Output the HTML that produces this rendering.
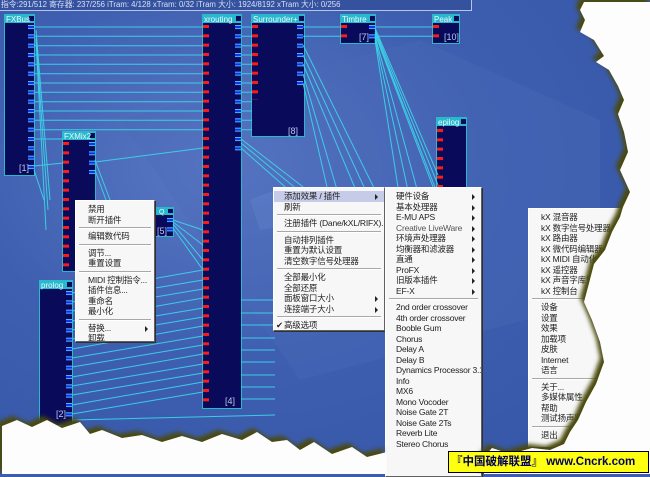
<!DOCTYPE html>
<html><head><meta charset="utf-8">
<style>
*{margin:0;padding:0;box-sizing:border-box}
body{width:650px;height:474px;overflow:hidden;position:relative;background:#3d5cae;font-family:"Liberation Sans","Noto Sans CJK SC",sans-serif}
svg{position:absolute;left:0;top:0}
.menu{position:absolute;background:#f7f7f7;border:1px solid #fff;border-right-color:#606060;border-bottom-color:#606060;box-shadow:1px 1px 0 #303030;padding-top:3px;font-size:8.5px;letter-spacing:-0.2px;color:#222;overflow:hidden}
.it{height:10.5px;line-height:10.5px;position:relative;white-space:nowrap}
.sep{height:6px;position:relative}
.sep:after{content:"";position:absolute;left:3px;right:3px;top:2px;border-top:1px solid #a8a8a8;border-bottom:1px solid #fff}
.ar:after{content:"";position:absolute;right:6px;top:3px;border-left:3px solid #222;border-top:3px solid transparent;border-bottom:3px solid transparent}
.hl{background:#c6cbe8}
.g{color:#555}
#top{position:absolute;left:0;top:0;width:472px;height:11px;border-bottom:1px solid #b8c4e8;border-right:1px solid #b8c4e8;background:#35529e;color:#d8e0f8;font-size:7.8px;line-height:10px;padding-left:1px;white-space:nowrap;overflow:hidden}
.lbl{position:absolute;color:#b8c8f0;font-size:9px;font-family:"Liberation Sans",sans-serif}
#wm{position:absolute;left:448px;top:451px;width:201px;height:22px;background:#ffff10;border:1px solid #000;color:#000060;font-weight:bold;font-size:11.5px;line-height:20px;white-space:nowrap;padding-left:2px;overflow:hidden}
</style></head><body>
<svg width="650" height="474">
<defs>
<radialGradient id="bg" cx="0.35" cy="0.35" r="0.8">
<stop offset="0" stop-color="#5a78c4"/><stop offset="0.5" stop-color="#3e5fb0"/><stop offset="1" stop-color="#3656a8"/></radialGradient>
<pattern id="R25" patternUnits="userSpaceOnUse" x="0" y="25" width="650" height="9.333"><rect width="650" height="3" fill="#ff1a1a"/></pattern>
<pattern id="B25" patternUnits="userSpaceOnUse" x="0" y="25" width="650" height="9.333"><rect width="650" height="4" fill="#50b8ff"/><rect y="1" width="650" height="2" fill="#1030e8"/></pattern>
<pattern id="R142" patternUnits="userSpaceOnUse" x="0" y="142" width="650" height="9.333"><rect width="650" height="3" fill="#ff1a1a"/></pattern>
<pattern id="B142" patternUnits="userSpaceOnUse" x="0" y="142" width="650" height="9.333"><rect width="650" height="4" fill="#50b8ff"/><rect y="1" width="650" height="2" fill="#1030e8"/></pattern>
<pattern id="B291" patternUnits="userSpaceOnUse" x="0" y="291" width="650" height="9.333"><rect width="650" height="4" fill="#50b8ff"/><rect y="1" width="650" height="2" fill="#1030e8"/></pattern>
<pattern id="R129" patternUnits="userSpaceOnUse" x="0" y="129" width="650" height="9.333"><rect width="650" height="3" fill="#ff1a1a"/></pattern>
<pattern id="B218" patternUnits="userSpaceOnUse" x="0" y="218" width="650" height="9.333"><rect width="650" height="4" fill="#50b8ff"/><rect y="1" width="650" height="2" fill="#1030e8"/></pattern>
</defs>
<rect width="650" height="474" fill="url(#bg)"/>
<path d="M120 120 L420 40 L600 120 L600 300 L300 380 Z" fill="#4a6ab8" opacity="0.35"/>
<path d="M250 200 Q350 150 470 300 L430 320 Q360 210 260 230Z" fill="#6a8ad0" opacity="0.3"/>
<g stroke="#2ab8cc" stroke-width="1">
<rect x="4.5" y="14.5" width="30" height="161" fill="#0a0a5a"/>
<rect x="202.5" y="14.5" width="39" height="394" fill="#0a0a5a"/>
<rect x="251.5" y="14.5" width="53" height="122" fill="#0a0a5a"/>
<rect x="340.5" y="14.5" width="35" height="29" fill="#0a0a5a"/>
<rect x="432.5" y="14.5" width="27" height="29" fill="#0a0a5a"/>
<rect x="436.5" y="117.5" width="30" height="90" fill="#0a0a5a"/>
<rect x="62.5" y="131.5" width="33" height="140" fill="#0a0a5a"/>
<rect x="150.5" y="207.5" width="23" height="29" fill="#0a0a5a"/>
<rect x="39.5" y="280.5" width="33" height="145" fill="#0a0a5a"/>
</g>
<g fill="#2ab8cc">
<rect x="4" y="14" width="31" height="9"/><rect x="202" y="14" width="40" height="9"/><rect x="251" y="14" width="54" height="9"/>
<rect x="340" y="14" width="36" height="9"/><rect x="432" y="14" width="28" height="9"/><rect x="436" y="117" width="31" height="9"/>
<rect x="62" y="131" width="34" height="9"/><rect x="150" y="207" width="24" height="8"/><rect x="39" y="280" width="34" height="9"/>
</g>
<g fill="#0a0a5a"><rect x="29" y="16" width="5" height="5"/><rect x="236" y="16" width="5" height="5"/><rect x="299" y="16" width="5" height="5"/><rect x="370" y="16" width="5" height="5"/><rect x="454" y="16" width="5" height="5"/><rect x="461" y="119" width="5" height="5"/><rect x="90" y="133" width="5" height="5"/><rect x="168" y="209" width="5" height="4"/><rect x="67" y="282" width="5" height="5"/></g>
<g fill="#e8f8ff" font-size="8" font-family="Liberation Sans,sans-serif">
<text x="6" y="22">FXBus</text><text x="204" y="22">xrouting</text><text x="253" y="22">Surrounder+</text><text x="342" y="22">Timbre</text><text x="434" y="22">Peak</text><text x="438" y="125">epilog</text><text x="64" y="139">FXMix2</text><text x="41" y="288">prolog</text><text x="159" y="214" font-size="7">Q</text>
</g>
<rect x="28" y="25" width="6" height="146" fill="url(#B25)"/>
<rect x="203" y="25" width="6" height="380" fill="url(#R25)"/>
<rect x="235" y="25" width="6" height="128" fill="url(#B25)"/>
<rect x="252" y="25" width="6" height="75" fill="url(#R25)"/>
<rect x="297" y="25" width="6" height="65" fill="url(#B25)"/>
<rect x="341" y="25" width="6" height="18" fill="url(#R25)"/>
<rect x="369" y="25" width="6" height="18" fill="url(#B25)"/>
<rect x="433" y="25" width="6" height="18" fill="url(#R25)"/>
<rect x="63" y="142" width="6" height="128" fill="url(#R142)"/>
<rect x="89" y="142" width="6" height="37" fill="url(#B142)"/>
<rect x="66" y="291" width="6" height="130" fill="url(#B291)"/>
<rect x="437" y="129" width="6" height="78" fill="url(#R129)"/>
<rect x="167" y="218" width="6" height="16" fill="url(#B218)"/>
<g stroke="#3cd8ec" stroke-width="1" fill="none" opacity="0.9">
<path d="M34 27H203M34 36.3H203M34 45.7H203M34 55H203M34 64.3H203M34 73.7H203M34 83H203M34 92.3H203M34 101.7H203M34 111H203M34 120.3H203M34 129.7H203M34 139H63"/>
<path d="M34 166L63 163M95 162L203 148"/>
<path d="M36 30L50 200M36 38L48 210M36 40L46 230M34 170L44 200"/>
<path d="M95 160L110 200M95 170L106 200"/>
<path d="M241 27H252M241 36.3H252M241 45.7H252M241 55H252M241 64.3H252M241 73.7H252M241 83H252M241 92.3H252M241 101.7H252M241 111H252M241 120.3H252M241 129.7H252"/>
<path d="M303 27H341M303 36.3H341M375 27H433M375 36.3H433"/>
<path d="M375 28L438 175M375 30L438 185M375 32L438 195M375 34L438 200M375 36L420 200M375 38L410 200M375 40L400 200"/>
<path d="M303 45L380 200M303 55L370 200M303 64L360 200M303 74L340 200M303 83L330 200"/>
<path d="M241 139L320 200M241 148L300 200M241 143L310 200"/>
<path d="M173 220L203 230M173 222L203 245M173 224L203 260M173 228L203 270"/>
<path d="M72 293L203 270M72 302L203 280M72 311L203 289M72 321L203 298M72 330L203 308M72 339L203 317M72 349L203 326M72 358L203 336M72 367L203 345M72 377L203 354M72 386L203 364M72 395L203 373M72 405L203 382M72 414L203 392"/>
<path d="M241 300H275M241 313H275M241 325H275M241 338H275M241 350H275M241 362H275M241 375H275M241 387H275M241 399H275M72 420L275 415"/>
</g>
</svg>
<div id="top">指令:291/512 寄存器: 237/256 iTram: 4/128 xTram: 0/32 iTram 大小: 1924/8192 xTram 大小: 0/256</div>
<div class="lbl" style="left:19px;top:163px">[1]</div>
<div class="lbl" style="left:225px;top:396px">[4]</div>
<div class="lbl" style="left:288px;top:126px">[8]</div>
<div class="lbl" style="left:359px;top:32px">[7]</div>
<div class="lbl" style="left:444px;top:32px">[10]</div>
<div class="lbl" style="left:157px;top:226px">[5]</div>
<div class="lbl" style="left:56px;top:409px">[2]</div>

<div class="menu" style="left:75px;top:200px;width:80px;height:142px">
<div class="it" style="padding-left:12px">禁用</div><div class="it" style="padding-left:12px">断开插件</div><div class="sep"></div>
<div class="it" style="padding-left:12px">编辑数代码</div><div class="sep"></div>
<div class="it" style="padding-left:12px">调节...</div><div class="it" style="padding-left:12px">重置设置</div><div class="sep"></div>
<div class="it" style="padding-left:12px">MIDI 控制指令...</div><div class="it" style="padding-left:12px">插件信息...</div><div class="it" style="padding-left:12px">重命名</div><div class="it" style="padding-left:12px">最小化</div><div class="sep"></div>
<div class="it ar" style="padding-left:12px">替换...</div><div class="it" style="padding-left:12px">卸载</div>
</div>

<div class="menu" style="left:273px;top:187px;width:112px;height:144px">
<div class="it ar hl" style="padding-left:10px">添加效果 / 插件</div><div class="it" style="padding-left:10px">刷新</div><div class="sep"></div>
<div class="it" style="padding-left:10px">注册插件 (Dane/kXL/RIFX)...</div><div class="sep"></div>
<div class="it" style="padding-left:10px">自动排列插件</div><div class="it" style="padding-left:10px">重置为默认设置</div><div class="it" style="padding-left:10px">清空数字信号处理器</div><div class="sep"></div>
<div class="it" style="padding-left:10px">全部最小化</div><div class="it" style="padding-left:10px">全部还原</div><div class="it ar" style="padding-left:10px">面板窗口大小</div><div class="it ar" style="padding-left:10px">连接端子大小</div><div class="sep"></div>
<div class="it" style="padding-left:10px"><span style="position:absolute;left:2px">✔</span>高级选项</div>
</div>

<div class="menu" style="left:385px;top:187px;width:97px;height:290px">
<div class="it ar" style="padding-left:10px">硬件设备</div><div class="it ar" style="padding-left:10px">基本处理器</div><div class="it ar" style="padding-left:10px">E-MU APS</div><div class="it ar g" style="padding-left:10px">Creative LiveWare</div><div class="it ar" style="padding-left:10px">环境声处理器</div><div class="it ar" style="padding-left:10px">均衡器和滤波器</div><div class="it ar" style="padding-left:10px">直通</div><div class="it ar" style="padding-left:10px">ProFX</div><div class="it ar" style="padding-left:10px">旧版本插件</div><div class="it ar" style="padding-left:10px">EF-X</div><div class="sep"></div>
<div class="it" style="padding-left:10px">2nd order crossover</div><div class="it" style="padding-left:10px">4th order crossover</div><div class="it" style="padding-left:10px">Booble Gum</div><div class="it" style="padding-left:10px">Chorus</div><div class="it" style="padding-left:10px">Delay A</div><div class="it" style="padding-left:10px">Delay B</div><div class="it" style="padding-left:10px">Dynamics Processor 3.1</div><div class="it" style="padding-left:10px">Info</div><div class="it" style="padding-left:10px">MX6</div><div class="it" style="padding-left:10px">Mono Vocoder</div><div class="it" style="padding-left:10px">Noise Gate 2T</div><div class="it" style="padding-left:10px">Noise Gate 2Ts</div><div class="it" style="padding-left:10px">Reverb Lite</div><div class="it" style="padding-left:10px">Stereo Chorus</div>
</div>

<div class="menu" style="left:528px;top:208px;width:100px;height:240px">
<div class="it" style="padding-left:12px">kX 混音器</div><div class="it" style="padding-left:12px">kX 数字信号处理器</div><div class="it" style="padding-left:12px">kX 路由器</div><div class="it" style="padding-left:12px">kX 微代码编辑器</div><div class="it" style="padding-left:12px">kX MIDI 自动化</div><div class="it" style="padding-left:12px">kX 遥控器</div><div class="it" style="padding-left:12px">kX 声音字库管理</div><div class="it" style="padding-left:12px">kX 控制台</div><div class="sep"></div>
<div class="it" style="padding-left:12px">设备</div><div class="it" style="padding-left:12px">设置</div><div class="it" style="padding-left:12px">效果</div><div class="it" style="padding-left:12px">加载项</div><div class="it" style="padding-left:12px">皮肤</div><div class="it" style="padding-left:12px">Internet</div><div class="it ar" style="padding-left:12px">语言</div><div class="sep"></div>
<div class="it" style="padding-left:12px">关于...</div><div class="it" style="padding-left:12px">多媒体属性</div><div class="it" style="padding-left:12px">帮助</div><div class="it" style="padding-left:12px">测试扬声器</div><div class="sep"></div>
<div class="it" style="padding-left:12px">退出</div>
</div>

<svg width="650" height="474">
<defs><filter id="blur"><feGaussianBlur stdDeviation="2"/></filter></defs>
<path d="M650 0H582L578 8L583 18L578 30L592 38L602 54L594 60L607 68L616 84L622 98L616 112L622 130L626 150L618 168L628 190L621 205L618 215L610 230L603 248L592 262L586 285L582 300L590 318L598 340L602 360L594 382L584 400L576 418L568 430L562 442L548 448L530 446L508 452L490 446L482 455L482 474H385L385 450L365 455L350 445L330 452L312 440L298 448L285 438L270 440L255 430L240 438L220 432L200 440L180 434L160 440L140 433L120 436L100 428L88 432L78 420L60 426L45 418L30 425L15 418L0 424V474H650Z" fill="#4a4a10" filter="url(#blur)" transform="translate(-2,-2)"/>
<path d="M650 0H582L578 8L583 18L578 30L592 38L602 54L594 60L607 68L616 84L622 98L616 112L622 130L626 150L618 168L628 190L621 205L618 215L610 230L603 248L592 262L586 285L582 300L590 318L598 340L602 360L594 382L584 400L576 418L568 430L562 442L548 448L530 446L508 452L490 446L482 455L482 474H385L385 450L365 455L350 445L330 452L312 440L298 448L285 438L270 440L255 430L240 438L220 432L200 440L180 434L160 440L140 433L120 436L100 428L88 432L78 420L60 426L45 418L30 425L15 418L0 424V474H650Z" fill="#fdfdfd" transform="translate(2,2)"/>
</svg>
<div id="wm">『中国破解联盟』 www.Cncrk.com</div>
</body></html>
